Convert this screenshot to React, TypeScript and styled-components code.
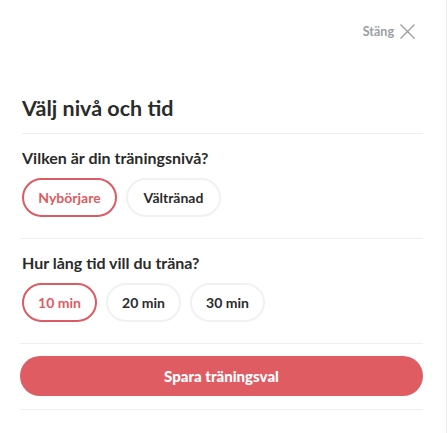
import React, { useState } from "react";
import styled, { createGlobalStyle } from "styled-components";

const Global = createGlobalStyle`
  html, body { margin: 0; padding: 0; background: #fff; }
  body { font-family: Lato, "Noto Sans", sans-serif; color: #2b2b2b; }
  * { box-sizing: border-box; }
`;

const Panel = styled.div`
  width: 447px;
  height: 433px;
  border-right: 1px solid #ececec;
  padding: 0 23px 0 20px;
  display: flex;
  flex-direction: column;
`;

const TopBar = styled.div`
  display: flex;
  justify-content: flex-end;
  align-items: center;
  height: 62px;
  padding-right: 7px;
`;

const CloseButton = styled.button`
  display: flex;
  align-items: center;
  gap: 5px;
  background: none;
  border: none;
  padding: 0;
  font-family: inherit;
  font-size: 12.5px;
  font-weight: 700;
  color: #9a9ea4;
  cursor: pointer;
`;

const Title = styled.h1`
  margin: 32px 0 0 2px;
  font-size: 21.5px;
  font-weight: 700;
  line-height: 28px;
  color: #2b2b2b;
  padding-bottom: 11px;
  border-bottom: 1px solid #efefef;
`;

const Section = styled.section`
  padding: 14px 0 21px 2px;
  border-bottom: 1px solid #efefef;
`;

const Question = styled.h2`
  margin: 0 0 10px 0;
  font-size: 16px;
  font-weight: 700;
  line-height: 20px;
  color: #2b2b2b;
`;

const Options = styled.div`
  display: flex;
  gap: 9px;
`;

const Option = styled.button<{ $selected: boolean; $w: number }>`
  width: ${(p) => p.$w}px;
  height: 39px;
  border-radius: 999px;
  background: #fff;
  border: 2px solid ${(p) => (p.$selected ? "#dd5b62" : "#f1f1f1")};
  color: ${(p) => (p.$selected ? "#dd5b62" : "#2b2b2b")};
  font-family: inherit;
  font-size: 14px;
  font-weight: 700;
  cursor: pointer;
  padding: 0;
`;

const Footer = styled.div`
  padding: 12px 0 13px 0;
  border-bottom: 1px solid #efefef;
`;

const SaveButton = styled.button`
  width: 100%;
  height: 40px;
  border-radius: 999px;
  border: none;
  background: #df5c63;
  color: #fff;
  font-family: inherit;
  font-size: 15px;
  font-weight: 900;
  cursor: pointer;
`;

export default function App() {
  const [level, setLevel] = useState("Nybörjare");
  const [time, setTime] = useState("10 min");
  return (
    <>
      <Global />
      <Panel>
        <TopBar>
          <CloseButton>
            Stäng
            <svg width="17" height="17" viewBox="0 0 17 17" fill="none" stroke="#9a9ea4" strokeWidth="1.4">
              <path d="M1.5 1.5 L15.5 15.5 M15.5 1.5 L1.5 15.5" />
            </svg>
          </CloseButton>
        </TopBar>
        <Title>Välj nivå och tid</Title>
        <Section>
          <Question>Vilken är din träningsnivå?</Question>
          <Options>
            {["Nybörjare", "Vältränad"].map((l) => (
              <Option key={l} $w={95} $selected={level === l} onClick={() => setLevel(l)}>
                {l}
              </Option>
            ))}
          </Options>
        </Section>
        <Section>
          <Question>Hur lång tid vill du träna?</Question>
          <Options>
            {["10 min", "20 min", "30 min"].map((t) => (
              <Option key={t} $w={75} $selected={time === t} onClick={() => setTime(t)}>
                {t}
              </Option>
            ))}
          </Options>
        </Section>
        <Footer>
          <SaveButton>Spara träningsval</SaveButton>
        </Footer>
      </Panel>
    </>
  );
}
